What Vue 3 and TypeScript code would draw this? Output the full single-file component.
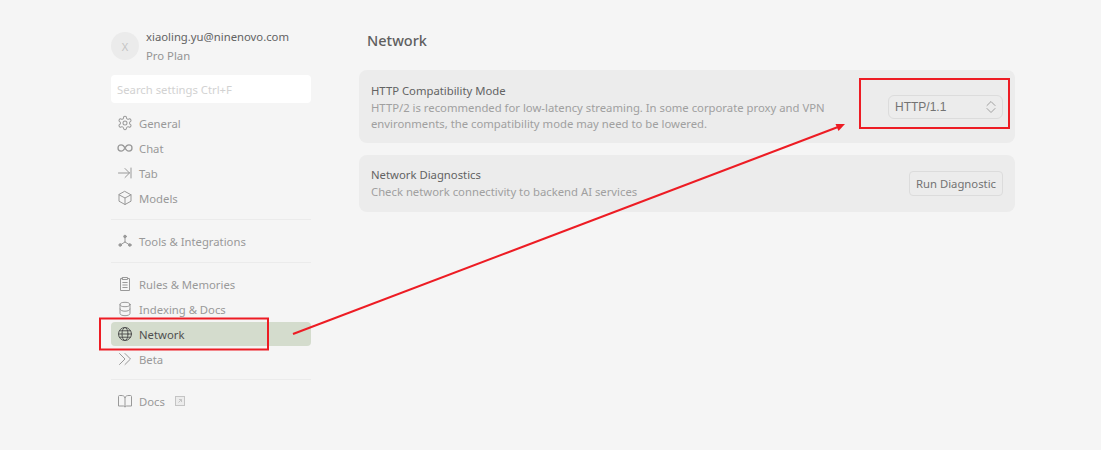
<script setup lang="ts">
interface Item { label: string; icon: string; active?: boolean; ext?: boolean }
const groups: Item[][] = [
  [
    { label: 'General', icon: 'gear' },
    { label: 'Chat', icon: 'inf' },
    { label: 'Tab', icon: 'tab' },
    { label: 'Models', icon: 'cube' },
  ],
  [{ label: 'Tools & Integrations', icon: 'tools' }],
  [
    { label: 'Rules & Memories', icon: 'clip' },
    { label: 'Indexing & Docs', icon: 'db' },
    { label: 'Network', icon: 'globe', active: true },
    { label: 'Beta', icon: 'beta' },
  ],
  [{ label: 'Docs', icon: 'book', ext: true }],
]
</script>

<template>
  <div class="page">
    <aside class="side">
      <div class="profile">
        <div class="avatar">X</div>
        <div class="who">
          <div class="email">xiaoling.yu@ninenovo.com</div>
          <div class="plan">Pro Plan</div>
        </div>
      </div>
      <div class="search">Search settings Ctrl+F</div>
      <template v-for="(g, gi) in groups" :key="gi">
        <div v-if="gi > 0" class="sep"></div>
        <div class="group">
          <div v-for="it in g" :key="it.label" class="item" :class="{ active: it.active }">
            <svg class="ico" viewBox="0 0 16 16" fill="none" stroke="currentColor" stroke-width="1" stroke-linecap="round" stroke-linejoin="round">
              <g v-if="it.icon === 'gear'" transform="scale(.667)" stroke-width="1.500">
                <path d="M12.220 2h-.44a2 2 0 0 0-2 2v.18a2 2 0 0 1-1 1.730l-.43.25a2 2 0 0 1-2 0l-.15-.08a2 2 0 0 0-2.730.73l-.22.38a2 2 0 0 0 .73 2.730l.15.1a2 2 0 0 1 1 1.720v.51a2 2 0 0 1-1 1.740l-.15.09a2 2 0 0 0-.73 2.730l.22.38a2 2 0 0 0 2.730.73l.15-.08a2 2 0 0 1 2 0l.43.25a2 2 0 0 1 1 1.730V20a2 2 0 0 0 2 2h.44a2 2 0 0 0 2-2v-.18a2 2 0 0 1 1-1.730l.43-.25a2 2 0 0 1 2 0l.15.08a2 2 0 0 0 2.730-.73l.22-.39a2 2 0 0 0-.73-2.730l-.15-.08a2 2 0 0 1-1-1.740v-.5a2 2 0 0 1 1-1.740l.15-.09a2 2 0 0 0 .73-2.730l-.22-.38a2 2 0 0 0-2.730-.73l-.15.08a2 2 0 0 1-2 0l-.43-.25a2 2 0 0 1-1-1.730V4a2 2 0 0 0-2-2z" />
                <circle cx="12" cy="12" r="3" />
              </g>
              <path v-else-if="it.icon === 'inf'" stroke-width="1.300" d="M8 8C7 6 5.800 4.900 4.100 4.900 2.300 4.900 1 6.200 1 8s1.300 3.100 3.100 3.100C5.800 11.100 7 10 8 8zm0 0c1-2 2.200-3.100 3.900-3.100 1.800 0 3.100 1.300 3.100 3.100s-1.300 3.100-3.100 3.100C10.200 11.100 9 10 8 8z" />
              <path v-else-if="it.icon === 'tab'" d="M1.500 8h11M8 3.500 12.500 8 8 12.500M14 3v10" />
              <path v-else-if="it.icon === 'cube'" d="M8 1.500 14 4.800v6.400L8 14.500 2 11.200V4.800zM2 4.800 8 8l6-3.200M8 8v6.500" />
              <template v-else-if="it.icon === 'tools'">
                <path d="M8 4.500V9M8 9l-4 2.500M8 9l4 2.500" />
                <circle cx="8" cy="3.500" r="1.300" fill="currentColor" />
                <circle cx="3.200" cy="12" r="1.300" fill="currentColor" />
                <circle cx="12.800" cy="12" r="1.300" fill="currentColor" />
              </template>
              <path v-else-if="it.icon === 'clip'" d="M5.500 2.500H3.500v12h9v-12h-2M5.500 1.500h5v2h-5zM5.800 6.500h4.400M5.800 9h4.400M5.800 11.500h4.400" />
              <template v-else-if="it.icon === 'db'">
                <ellipse cx="8" cy="3.500" rx="5" ry="2.200" />
                <path d="M3 3.500v9c0 1.200 2.200 2.200 5 2.200s5-1 5-2.200v-9M3 8c0 1.200 2.200 2.200 5 2.200S13 9.200 13 8" />
              </template>
              <template v-else-if="it.icon === 'globe'">
                <circle cx="8" cy="8" r="6.500" />
                <ellipse cx="8" cy="8" rx="3" ry="6.500" />
                <path d="M1.500 8h13M2.500 4.800h11M2.500 11.200h11" />
              </template>
              <path v-else-if="it.icon === 'beta'" d="M2.500 2.500 8 8l-5.500 5.500M8 2.500 13.500 8 8 13.500" />
              <path v-else-if="it.icon === 'book'" d="M8 4.500C7.500 3 6 2.500 4 2.500H2.500c-.6 0-1 .4-1 1V13h5c.9 0 1.500.4 1.500 1 0-.6.6-1 1.500-1h5V3.500c0-.6-.4-1-1-1H12c-2 0-3.500.5-4 2zm0 0V14" />
            </svg>
            <span class="label">{{ it.label }}</span>
            <svg v-if="it.ext" class="ext" viewBox="0 0 10 10" fill="#ececec" stroke="currentColor" stroke-width="1">
              <rect x=".5" y=".5" width="9" height="9" />
              <path d="M3.500 6.500 6.500 3.500M4 3.500h2.500V6" fill="none" />
            </svg>
          </div>
        </div>
      </template>
    </aside>

    <main class="main">
      <h1 class="title">Network</h1>
      <section class="card first">
        <div class="text">
          <div class="name">HTTP Compatibility Mode</div>
          <div class="desc">HTTP/2 is recommended for low-latency streaming. In some corporate proxy and VPN environments, the compatibility mode may need to be lowered.</div>
        </div>
        <div class="select">
          <span>HTTP/1.1</span>
          <svg class="updown" viewBox="0 0 10 14" fill="none" stroke="currentColor" stroke-width="1" stroke-linecap="round" stroke-linejoin="round">
            <path d="M1 5.500 5 1.500l4 4M1 8.500l4 4 4-4" />
          </svg>
        </div>
      </section>
      <section class="card">
        <div class="text">
          <div class="name">Network Diagnostics</div>
          <div class="desc">Check network connectivity to backend AI services</div>
        </div>
        <button class="btn">Run Diagnostic</button>
      </section>
    </main>

    <svg class="marks" width="1101" height="450" viewBox="0 0 1101 450" fill="none">
      <rect x="100" y="318.500" width="168" height="31" stroke="#ed1c24" stroke-width="2" />
      <rect x="860" y="79" width="149" height="49" stroke="#ed1c24" stroke-width="2" />
      <path d="M293 334 838 127" stroke="#ed1c24" stroke-width="2" />
      <path d="M845 124 835.500 124 838.500 131z" fill="#ed1c24" />
    </svg>
  </div>
</template>

<style>
html, body { margin: 0; background: #f5f5f5; }
</style>

<style scoped>
.page {
  position: relative;
  width: 1101px;
  height: 450px;
  overflow: hidden;
  display: flex;
  background: #f5f5f5;
  font-family: "Noto Sans", "Open Sans", sans-serif;
  box-sizing: border-box;
  padding-left: 111px;
}
.side { width: 200px; padding-top: 27px; flex: none; }
.profile { display: flex; align-items: center; gap: 7px; height: 38px; }
.avatar {
  width: 28px; height: 28px; border-radius: 50%;
  background: #ebebeb; color: #c4c4c4;
  font-size: 11px; display: flex; align-items: center; justify-content: center;
}
.who { display: flex; flex-direction: column; gap: 3px; }
.email { font-size: 11.300px; line-height: 16px; color: #636363; }
.plan { font-size: 11.300px; line-height: 16px; color: #949494; }
.search {
  margin-top: 10px; height: 28px; background: #fff; border-radius: 4px; box-sizing: border-box;
  padding: 1px 0 0 6px; font-size: 11.300px; line-height: 27px; color: #d2d2d2;
}
.group { display: flex; flex-direction: column; gap: 1px; }
.search + .group { margin-top: 8px; }
.item {
  height: 24px; display: flex; align-items: center; gap: 6px; padding-left: 6px;
  font-size: 11.300px; color: #999; border-radius: 4px;
}
.item.active { background: #d4dccd; color: #505050; }
.ico { width: 16px; height: 16px; flex: none; }
.ext { width: 10px; height: 10px; margin-left: 4px; color: #c4c4c4; }
.sep { height: 1px; background: #ebebeb; margin: 9px 0; }
.sep:nth-last-child(2) { margin-top: 8px; }
.main { width: 656px; margin-left: 48px; flex: none; }
.title {
  margin: 30px 0 0 8px; font-size: 14.500px; line-height: 20px; font-weight: 500; color: #5f5f5f;
}
.card {
  background: #ececec; border-radius: 8px; padding: 12px;
  display: flex; align-items: center; gap: 30px; margin-top: 12px; box-sizing: border-box;
}
.card.first { margin-top: 20px; height: 73px; }
.first .text { padding-top: 2px; }
.text { flex: 1; }
.name { font-size: 11.300px; line-height: 16px; color: #636363; margin-bottom: 1px; }
.desc { font-size: 11.300px; line-height: 16px; color: #a0a0a0; }
.first .desc { width: 465px; }
.select {
  width: 115px; height: 24px; box-sizing: border-box; flex: none;
  border: 1px solid #dcdcdc; border-radius: 6px;
  display: flex; align-items: center; justify-content: space-between; padding: 0 6px;
  font-family: "Liberation Sans", Arial, sans-serif; font-size: 12px; color: #737373;
}
.updown { width: 10px; height: 14px; color: #a0a0a0; }
.btn {
  height: 25px; width: 94px; padding: 0; flex: none; background: transparent;
  border: 1px solid #dcdcdc; border-radius: 4px; color: #737373;
  font-family: inherit; font-size: 11.300px;
}
.marks { position: absolute; left: 0; top: 0; pointer-events: none; }
</style>
